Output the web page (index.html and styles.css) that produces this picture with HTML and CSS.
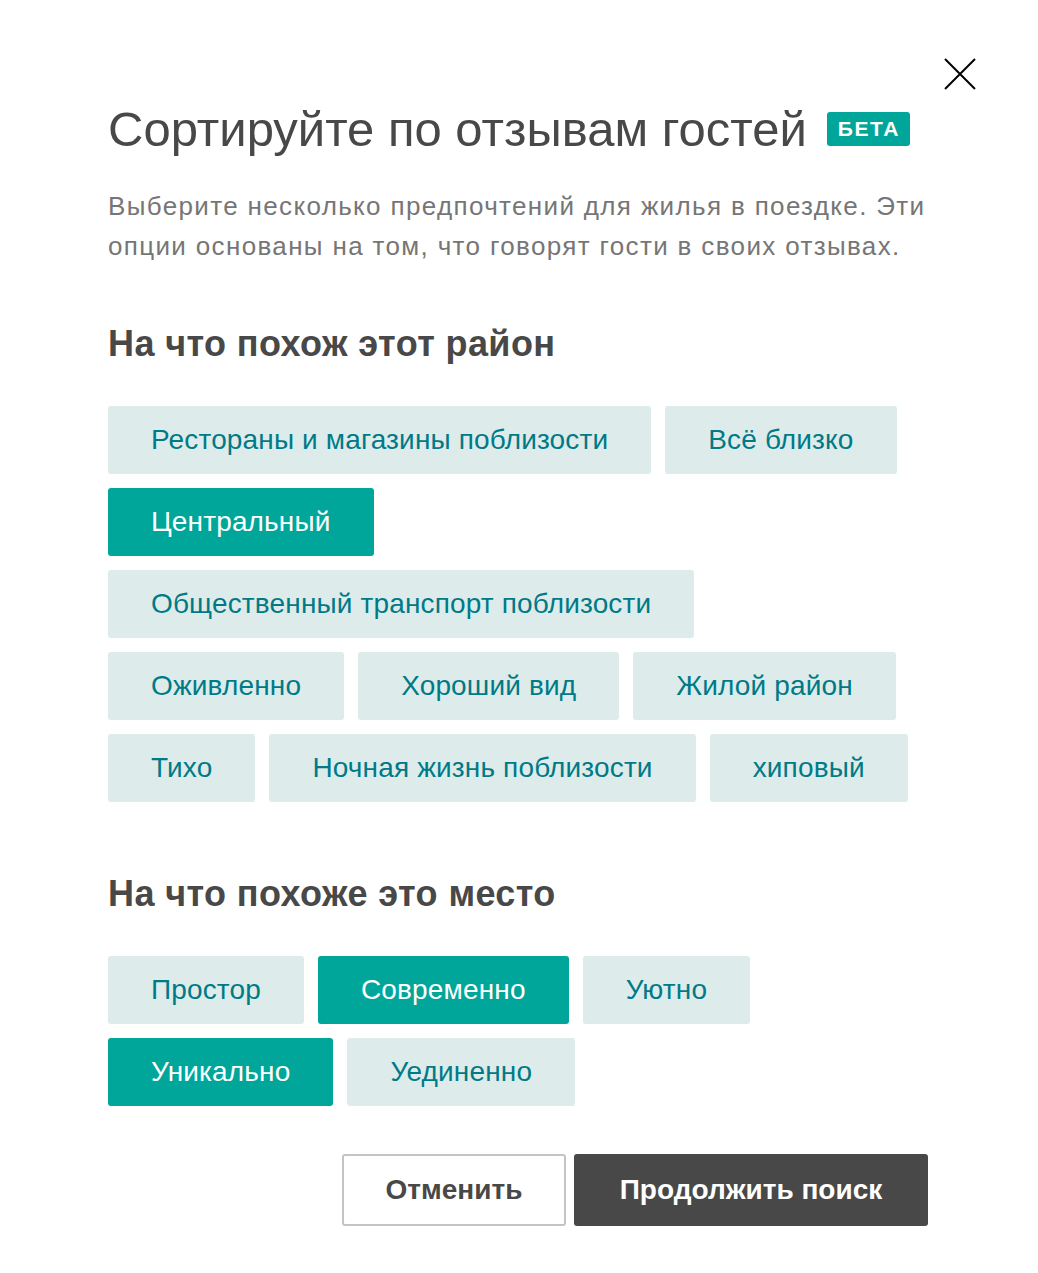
FILE: index.html
```html
<!DOCTYPE html>
<html lang="ru">
<head>
<meta charset="utf-8">
<title>Сортируйте по отзывам гостей</title>
<link rel="stylesheet" href="styles.css">
</head>
<body>
<div class="dialog">
  <button class="close" aria-label="Закрыть">
    <svg width="34" height="34" viewBox="0 0 34 34"><path d="M2 2 L32 32 M32 2 L2 32" stroke="#000" stroke-width="2" fill="none"/></svg>
  </button>
  <h1 class="title">Сортируйте по отзывам гостей <span class="badge">БЕТА</span></h1>
  <p class="lead">Выберите несколько предпочтений для жилья в поездке. Эти опции основаны на том, что говорят гости в своих отзывах.</p>

  <h2 class="section-title">На что похож этот район</h2>
  <div class="chips">
    <button class="chip">Рестораны и магазины поблизости</button>
    <button class="chip">Всё близко</button>
    <button class="chip chip--on">Центральный</button>
    <button class="chip">Общественный транспорт поблизости</button>
    <button class="chip">Оживленно</button>
    <button class="chip">Хороший вид</button>
    <button class="chip">Жилой район</button>
    <button class="chip">Тихо</button>
    <button class="chip">Ночная жизнь поблизости</button>
    <button class="chip">хиповый</button>
  </div>

  <h2 class="section-title section-title--second">На что похоже это место</h2>
  <div class="chips">
    <button class="chip">Простор</button>
    <button class="chip chip--on">Современно</button>
    <button class="chip">Уютно</button>
    <button class="chip chip--on">Уникально</button>
    <button class="chip">Уединенно</button>
  </div>

  <div class="actions">
    <button class="btn btn--ghost">Отменить</button>
    <button class="btn btn--dark">Продолжить поиск</button>
  </div>
</div>
</body>
</html>
```
FILE: styles.css
```css
* { box-sizing: border-box; }

body {
  margin: 0;
  background: #fff;
  font-family: "Liberation Sans", Arial, Helvetica, sans-serif;
  color: #484848;
}

.dialog {
  position: relative;
  padding: 96px 108px 40px;
}

.close {
  position: absolute;
  top: 57px;
  right: 61px;
  width: 34px;
  height: 34px;
  padding: 0;
  border: 0;
  background: none;
  cursor: pointer;
}
.close svg { display: block; }

.title {
  margin: 0;
  font-size: 49px;
  font-weight: 400;
  line-height: 66px;
  color: #484848;
  display: flex;
  align-items: center;
}

.badge {
  display: inline-block;
  margin-left: 20px;
  padding: 0 10px 0 11px;
  height: 34px;
  line-height: 34px;
  border-radius: 3px;
  background: #00a699;
  color: #fff;
  font-size: 21px;
  font-weight: 700;
  letter-spacing: 1.6px;
}

.lead {
  margin: 24px 0 0;
  font-size: 26px;
  line-height: 40px;
  letter-spacing: 1.35px;
  color: #767676;
}

.section-title {
  margin: 58px 0 0;
  font-size: 36px;
  font-weight: 700;
  line-height: 40px;
  letter-spacing: 0.4px;
  color: #484848;
}
.section-title--second { margin-top: 72px; }

.chips {
  display: flex;
  flex-wrap: wrap;
  gap: 14px;
  margin-top: 42px;
}

.chip {
  height: 68px;
  padding: 0 43px;
  border: 0;
  border-radius: 3px;
  background: #ddeceb;
  color: #007a87;
  font-family: inherit;
  font-size: 28px;
  letter-spacing: 0.15px;
  cursor: pointer;
}
.chip--on {
  background: #00a699;
  color: #fff;
}

.actions {
  display: flex;
  justify-content: flex-end;
  gap: 8px;
  margin-top: 48px;
  margin-right: 2px;
}

.btn {
  height: 72px;
  border-radius: 3px;
  font-family: inherit;
  font-size: 28px;
  font-weight: 700;
  cursor: pointer;
}
.btn--ghost {
  width: 224px;
  background: #fff;
  border: 2px solid #c4c4c4;
  color: #484848;
}
.btn--dark {
  width: 354px;
  background: #484848;
  border: 0;
  color: #fff;
}
```
